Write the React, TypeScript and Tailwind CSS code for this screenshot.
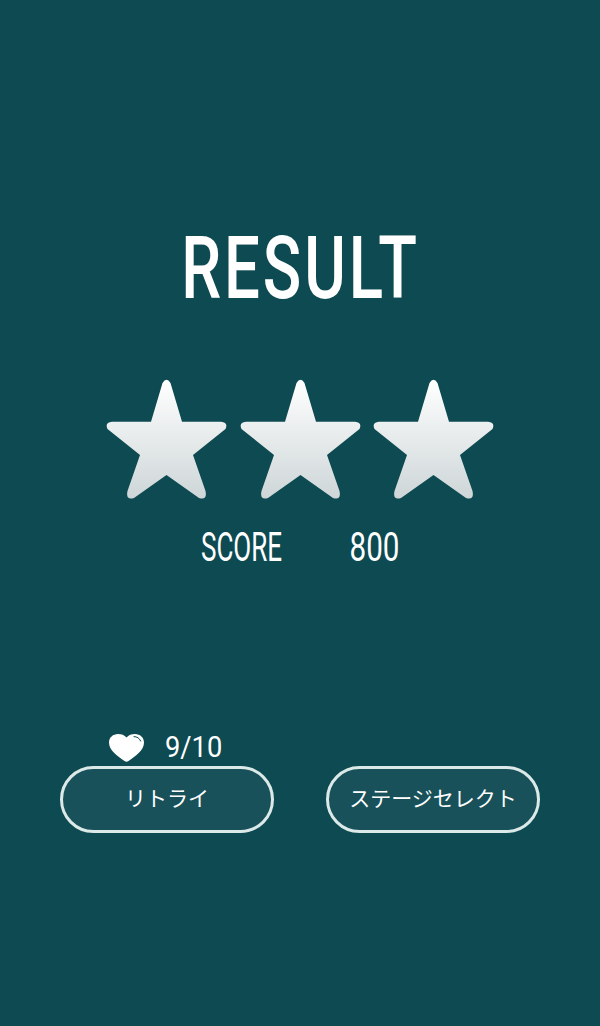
const STAR_PATH =
  'M45 42.7 L56.5 4 Q60.5 -2.5 64.5 4 L76 42.7 L115 42.7 Q122.5 43.5 119.5 50 L87 76 L99.5 112 Q101.5 121.5 93 119 L60.5 96 L28 119 Q19.5 121.5 21.5 112 L34 76 L1.5 50 Q-1.5 43.5 6 42.7 Z';

function Star({ id }: { id: string }) {
  return (
    <svg width="121" height="122" viewBox="0 0 121 122" className="block">
      <defs>
        <linearGradient id={id} x1="0" y1="0" x2="0" y2="1">
          <stop offset="0" stopColor="#ffffff" />
          <stop offset="1" stopColor="#ced6d8" />
        </linearGradient>
      </defs>
      <path d={STAR_PATH} fill={`url(#${id})`} />
    </svg>
  );
}

function Heart() {
  return (
    <svg width="35" height="28" viewBox="0 0 35 28" className="block">
      <path
        d="M15.5 27 C9 22.5 0 16.5 0 8.5 C0 3.5 4 0 9 0 C12.5 0 15.5 1 17.5 3.5 C19.5 1 22.5 0 26 0 C31 0 35 3.5 35 8.5 C35 16.5 26 22.5 19.5 27 Q17.5 28.5 15.5 27 Z"
        fill="#ffffff"
      />
      <path d="M25 2.6 C28 2.6 30.6 4.2 31.6 7" fill="none" stroke="#0d4a51" strokeWidth="1" strokeLinecap="round" />
    </svg>
  );
}

function PillButton({ label }: { label: string }) {
  return (
    <button className="flex h-[67px] w-[214px] items-center justify-center rounded-full border-[3px] border-[#dce9e9] bg-[#18515a] pb-1 font-['Noto_Sans_CJK_JP',sans-serif] text-[21px] text-white">
      {label}
    </button>
  );
}

export default function App() {
  const bodyFont = "font-['Roboto',sans-serif]";

  return (
    <div className={`flex h-[1026px] w-[600px] flex-col items-center overflow-hidden bg-[#0d4a51] pt-[223px] text-white ${bodyFont}`}>
      <h1 className="h-[90px] scale-x-[0.73] text-[87px] leading-[90px] font-medium tracking-[4px]">RESULT</h1>

      <div className="mt-[66px] flex gap-[12.5px]">
        <Star id="star-a" />
        <Star id="star-b" />
        <Star id="star-c" />
      </div>

      <div className="mt-[24px] flex h-[46px] w-[198px] items-center justify-between text-[40px] leading-[46px]">
        <span className="origin-left scale-x-[0.65]">SCORE</span>
        <span className="origin-right scale-x-[0.74]">800</span>
      </div>

      <div className="mt-[160px] flex h-[34px] w-[480px] items-center pl-[49px]">
        <Heart />
        <span className="ml-[21px] origin-left scale-x-[0.94] pb-[2px] text-[29px] leading-[34px]">9/10</span>
      </div>

      <div className="mt-px flex w-[480px] justify-between">
        <PillButton label="リトライ" />
        <PillButton label="ステージセレクト" />
      </div>
    </div>
  );
}
